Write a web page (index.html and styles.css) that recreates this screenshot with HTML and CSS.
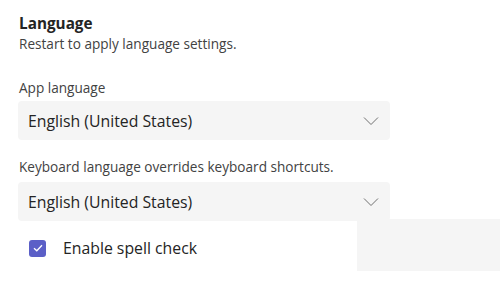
FILE: index.html
```html
<!DOCTYPE html>
<html lang="en">
<head>
<meta charset="utf-8">
<link rel="stylesheet" href="styles.css">
</head>
<body>
<div class="page">
  <h2 class="title">Language</h2>
  <p class="hint">Restart to apply language settings.</p>
  <label class="field-label">App language</label>
  <div class="select">
    <span class="select-value">English (United States)</span>
    <svg class="chevron" width="16" height="10" viewBox="0 0 16 10"><path d="M1 1.5 L8 8.5 L15 1.5" fill="none" stroke="#707070" stroke-width="1"/></svg>
  </div>
  <label class="field-label second">Keyboard language overrides keyboard shortcuts.</label>
  <div class="select">
    <span class="select-value">English (United States)</span>
    <svg class="chevron" width="16" height="10" viewBox="0 0 16 10"><path d="M1 1.5 L8 8.5 L15 1.5" fill="none" stroke="#707070" stroke-width="1"/></svg>
  </div>
  <div class="check-row">
    <span class="checkbox">
      <svg width="10" height="8" viewBox="0 0 10 8"><path d="M1 4.2 L3.8 6.8 L9 1.2" fill="none" stroke="#ffffff" stroke-width="1.3"/></svg>
    </span>
    <span class="check-label">Enable spell check</span>
  </div>
  <div class="ghost"></div>
</div>
</body>
</html>
```
FILE: styles.css
```css
html, body {
  margin: 0;
  padding: 0;
  background: #ffffff;
}
.page {
  position: relative;
  width: 500px;
  height: 289px;
  overflow: hidden;
  padding: 13px 0 0 19px;
  box-sizing: border-box;
  font-family: "Open Sans", "Noto Sans", sans-serif;
  color: #242424;
}
.title {
  margin: 0;
  font-size: 15.3px;
  line-height: 20px;
  font-weight: 700;
}
.hint {
  margin: 2px 0 0;
  font-size: 13.6px;
  line-height: 18px;
  color: #424242;
}
.field-label {
  display: block;
  margin-top: 26px;
  font-size: 13.6px;
  line-height: 18px;
  color: #424242;
}
.field-label.second {
  margin-top: 18px;
}
.select {
  margin-top: 4px;
  width: 372px;
  height: 39px;
  margin-left: -1px;
  box-sizing: border-box;
  background: #f5f5f5;
  border-radius: 4px;
  display: flex;
  align-items: center;
  justify-content: space-between;
  padding: 0 11px 0 10px;
}
.field-label.second + .select {
  margin-top: 6px;
}
.select-value {
  font-size: 15.8px;
  color: #242424;
}
.check-row {
  margin-top: 17px;
  display: flex;
  align-items: center;
  gap: 17px;
  padding-left: 10px;
}
.checkbox {
  width: 17px;
  height: 17px;
  border-radius: 3px;
  background: #5b5fc7;
  display: flex;
  align-items: center;
  justify-content: center;
}
.check-label {
  font-size: 15.8px;
  line-height: 20px;
}
.ghost {
  position: absolute;
  left: 357px;
  top: 219px;
  width: 143px;
  height: 52px;
  background: #f5f5f5;
}
```
